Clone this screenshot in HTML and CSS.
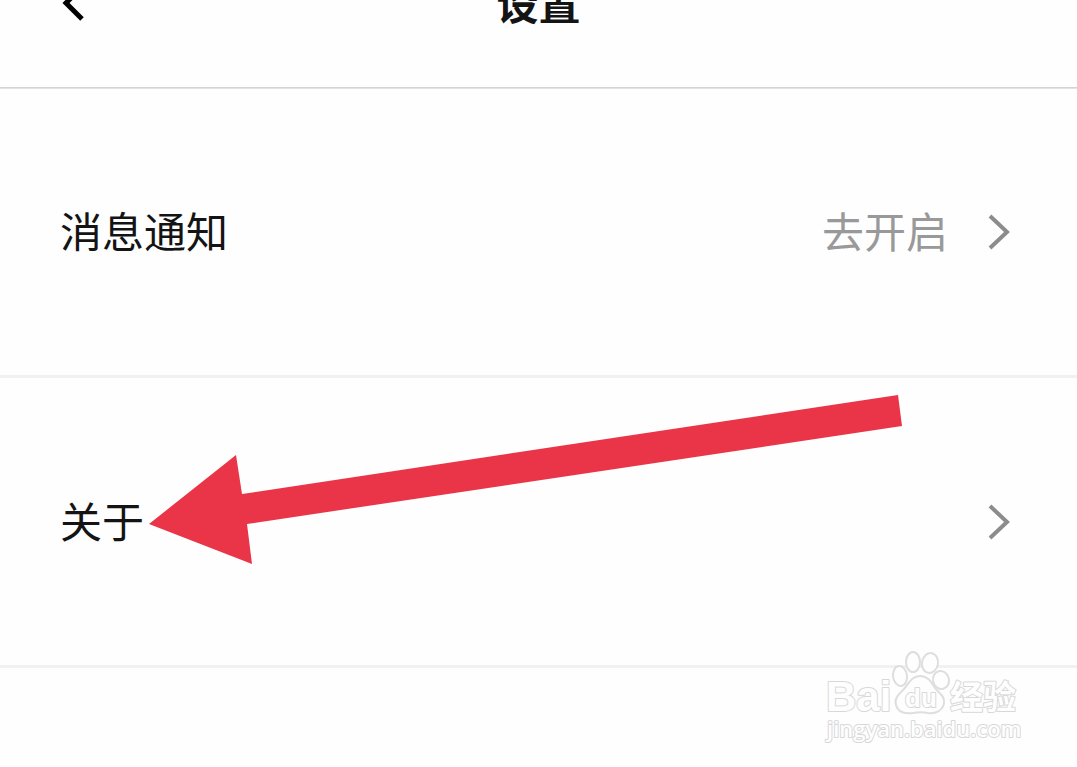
FILE: index.html
```html
<!DOCTYPE html>
<html lang="zh-CN">
<head>
    <meta charset="UTF-8">
    <meta name="viewport" content="width=device-width, initial-scale=1.0">
    <title>设置</title>
    <link rel="stylesheet" href="styles.css">
</head>
<body>

    <!-- Title bar -->
    <header class="top-bar">
        <button class="back" type="button" aria-label="返回">
            <svg width="24" height="36" viewBox="0 0 24 36">
                <path d="M20 2L4 18L20 34" fill="none" stroke="#000" stroke-width="5"/>
            </svg>
        </button>
        <h1>设置</h1>
    </header>

    <!-- Settings list -->
    <main class="settings">
        <a class="row" href="#notice">
            <span class="label">消息通知</span>
            <span class="value">去开启</span>
            <svg class="chevron" width="24" height="38" viewBox="0 0 24 38">
                <path d="M3 3L20 19L3 35" fill="none" stroke="#8c8c8c" stroke-width="4"/>
            </svg>
        </a>
        <a class="row" href="#about">
            <span class="label">关于</span>
            <svg class="chevron" width="24" height="38" viewBox="0 0 24 38">
                <path d="M3 3L20 19L3 35" fill="none" stroke="#8c8c8c" stroke-width="4"/>
            </svg>
        </a>
    </main>

    <!-- Arrow pointing at the second row -->
    <svg class="arrow" width="754" height="170" viewBox="0 0 754 170">
        <path d="M0 129L87 60L93 99L749 0L753 31L98 129L103 169Z" fill="#ea3548"/>
    </svg>

    <!-- Watermark -->
    <svg class="watermark" width="200" height="100" viewBox="0 0 200 100">
        <text class="brand" x="5" y="61">Bai</text>
        <g class="paw">
            <ellipse cx="79" cy="26" rx="7" ry="10" transform="rotate(-8 79 26)"/>
            <ellipse cx="92" cy="12" rx="7" ry="10"/>
            <ellipse cx="109" cy="13" rx="8" ry="10" transform="rotate(10 109 13)"/>
            <ellipse cx="120" cy="30" rx="8" ry="9" transform="rotate(-15 120 30)"/>
            <path d="M99 26C91 26 88 33 83 39C78 44 73 48 75 55C77 63 85 64 92 63C97 62 102 62 107 63C114 64 122 61 123 53C124 46 118 43 114 38C110 32 107 26 99 26Z"/>
        </g>
        <text class="du" x="84" y="57">du</text>
        <text class="brand-cn" x="129" y="59">经验</text>
        <text class="site" x="6" y="87">jingyan.baidu.com</text>
    </svg>

</body>
</html>
```
FILE: styles.css
```css
body {
    position: relative;
    min-height: 100vh;
    margin: 0;
    background-color: #fefefe;
    color: #141414;
    font-family: "Noto Sans CJK SC", sans-serif;
    font-size: 42px;
    line-height: 60px;
    display: flow-root;
    box-sizing: border-box;
}

.top-bar {
    display: grid;
    grid-template-columns: 1fr auto 1fr;
    align-items: center;
    margin-top: -80px;
    padding: 52px 62px 55px;
    border-bottom: 1px solid #d4d4d4;
    box-shadow: 0 1px 0 #e4e4e4;
}

.top-bar h1 {
    margin: 0;
    font-size: 42px;
    font-weight: 700;
}

.back {
    display: flex;
    justify-self: start;
    padding: 2px 0 0;
    border: 0;
    background: none;
    cursor: pointer;
}

.row {
    display: flex;
    align-items: center;
    padding: 112px 66px 111px 60px;
    border-bottom: 3px solid #f1f1f1;
    color: inherit;
    text-decoration: none;
}

.label,
.value {
    padding-bottom: 4px;
}

.label {
    flex: 1;
}

.value {
    color: #999;
}

.chevron {
    margin-left: 39px;
}

.arrow {
    position: absolute;
    left: 149px;
    top: 395px;
}

/* Watermark */
.watermark {
    position: absolute;
    right: 56px;
    top: 650px;
}

.paw {
    fill: #fefefe;
    stroke: #dedede;
    stroke-width: 2;
}

.watermark text {
    fill: #fefefe;
    stroke: #d8d8d8;
    stroke-width: 2px;
    stroke-linejoin: round;
    paint-order: stroke;
}

.watermark .brand {
    font-family: "Liberation Sans", sans-serif;
    font-size: 42px;
    font-weight: 700;
}

.watermark .du {
    font-family: "Liberation Sans", sans-serif;
    font-size: 26px;
    font-weight: 700;
}

.watermark .brand-cn {
    font-size: 33px;
    font-weight: 700;
}

.watermark .site {
    font-family: "Open Sans", sans-serif;
    font-size: 22px;
    font-weight: 600;
}
```
